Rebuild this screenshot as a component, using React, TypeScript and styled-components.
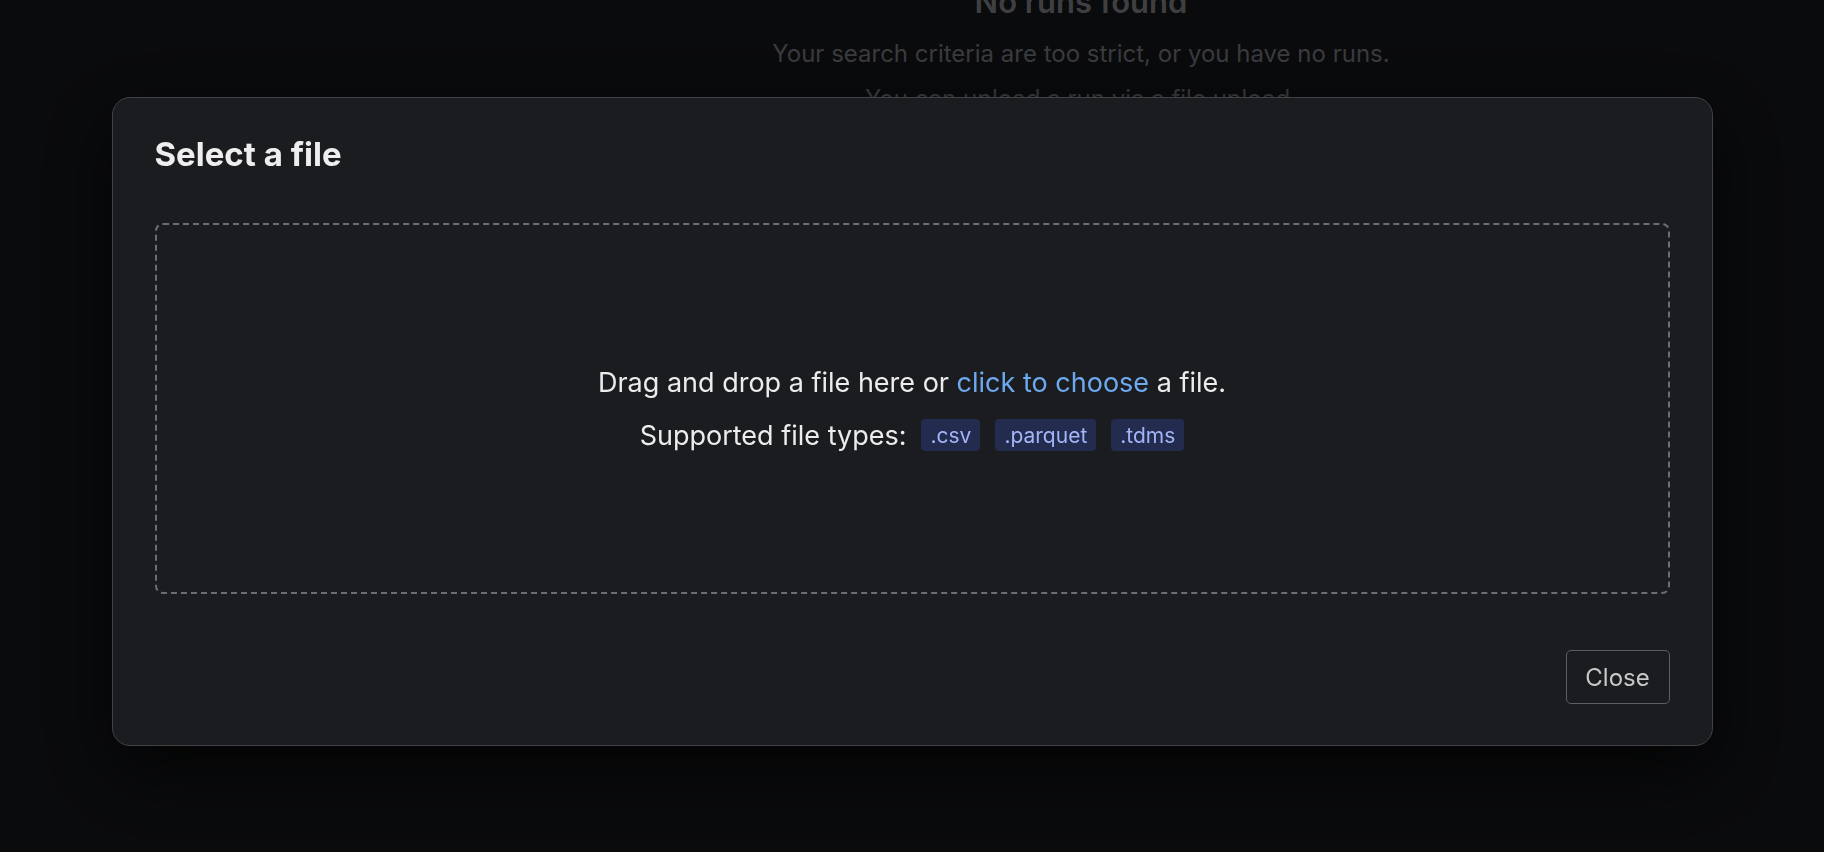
import React from "react";
import styled, { createGlobalStyle } from "styled-components";

const GlobalStyle = createGlobalStyle`
    html, body {
        margin: 0;
        padding: 0;
        background: #0c0d0f;
        font-family: Inter, "Noto Sans", sans-serif;
    }
    * {
        box-sizing: border-box;
    }
`;

const fileTypes = [".csv", ".parquet", ".tdms"];

export default function App() {
    return (
        <>
            <GlobalStyle />
            <Page>
                <Sidebar />
                <Main>
                    <EmptyState>
                        <h2>No runs found</h2>
                        <p>Your search criteria are too strict, or you have no runs.</p>
                        <p>You can upload a run via a file upload.</p>
                    </EmptyState>
                </Main>
            </Page>

            <Overlay>
                <Dialog role="dialog" aria-labelledby="select-file-title">
                    <DialogTitle id="select-file-title">Select a file</DialogTitle>
                    <DropZone>
                        <DropText>
                            Drag and drop a file here or <ChooseLink>click to choose</ChooseLink> a file.
                        </DropText>
                        <TypesRow>
                            <span>Supported file types:</span>
                            {fileTypes.map((type) => (
                                <TypeBadge key={type}>{type}</TypeBadge>
                            ))}
                        </TypesRow>
                    </DropZone>
                    <DialogFooter>
                        <CloseButton>Close</CloseButton>
                    </DialogFooter>
                </Dialog>
            </Overlay>
        </>
    );
}

const Page = styled.div`
    display: flex;
    height: 100vh;
    overflow: hidden;
    background: #0c0d0f;
`;

const Sidebar = styled.aside`
    width: 338px;
    flex-shrink: 0;
`;

const Main = styled.main`
    flex: 1;
    display: flex;
    justify-content: center;
`;

const EmptyState = styled.div`
    margin-top: -17px;
    text-align: center;

    h2 {
        margin: 0 0 19px;
        font-size: 31px;
        font-weight: 600;
        color: #4a4b4e;
    }
    p {
        margin: 0 0 16px;
        font-size: 24px;
        color: #45464a;
    }
`;

const Overlay = styled.div`
    position: fixed;
    inset: 0;
    display: flex;
    justify-content: center;
    align-items: flex-start;
    padding-top: 97px;
    background: rgba(0, 0, 0, 0.15);
`;

const Dialog = styled.div`
    width: 1601px;
    display: flex;
    flex-direction: column;
    padding: 36px 42px 41px;
    background: #1b1c1f;
    border: 1px solid #404246;
    border-radius: 18px;
    box-shadow: 0 24px 70px rgba(0, 0, 0, 0.7);
`;

const DialogTitle = styled.h1`
    margin: 0;
    font-size: 33px;
    font-weight: 650;
    color: #eeeeef;
`;

const DropZone = styled.div`
    margin-top: 49px;
    height: 371px;
    display: flex;
    flex-direction: column;
    align-items: center;
    justify-content: center;
    gap: 20px;
    border: 2px dashed #6a6d73;
    border-radius: 8px;
`;

const DropText = styled.p`
    margin: 0;
    font-size: 27px;
    color: #ececee;
`;

const ChooseLink = styled.span`
    color: #6ea9f0;
    cursor: pointer;
`;

const TypesRow = styled.div`
    display: flex;
    align-items: center;
    gap: 15px;
    font-size: 27px;
    color: #ececee;
`;

const TypeBadge = styled.code`
    display: inline-flex;
    align-items: center;
    height: 32px;
    padding: 0 9px;
    border-radius: 4px;
    background: #232b4f;
    color: #a3b5f7;
    font-family: Inter, "Noto Sans", sans-serif;
    font-size: 21px;
`;

const DialogFooter = styled.div`
    display: flex;
    justify-content: flex-end;
    margin-top: 56px;
`;

const CloseButton = styled.button`
    width: 104px;
    height: 54px;
    border: 1px solid #5c5e63;
    border-radius: 5px;
    background: transparent;
    color: #c6c7c9;
    font-family: Inter, "Noto Sans", sans-serif;
    font-size: 24px;
    cursor: pointer;
`;
